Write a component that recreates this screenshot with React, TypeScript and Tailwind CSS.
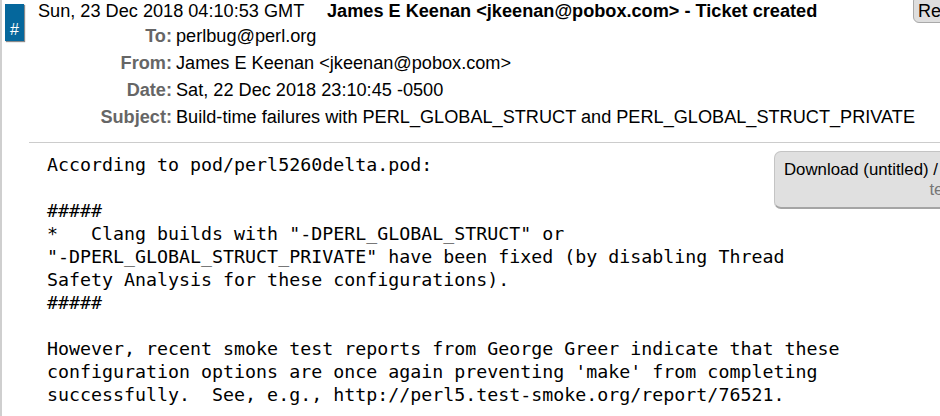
import React from "react";

const rows: { label: string; value: string }[] = [
	{ label: "To:", value: "perlbug@perl.org" },
	{ label: "From:", value: "James E Keenan <jkeenan@pobox.com>" },
	{ label: "Date:", value: "Sat, 22 Dec 2018 23:10:45 -0500" },
	{
		label: "Subject:",
		value: "Build-time failures with PERL_GLOBAL_STRUCT and PERL_GLOBAL_STRUCT_PRIVATE",
	},
];

const body = `According to pod/perl5260delta.pod:

#####
*   Clang builds with "-DPERL_GLOBAL_STRUCT" or
"-DPERL_GLOBAL_STRUCT_PRIVATE" have been fixed (by disabling Thread
Safety Analysis for these configurations).
#####

However, recent smoke test reports from George Greer indicate that these
configuration options are once again preventing 'make' from completing
successfully.  See, e.g., http://perl5.test-smoke.org/report/76521.`;

export default function App() {
	return (
		<div className="w-[940px] h-[416px] overflow-hidden bg-white flex font-['Liberation_Sans',Arial,sans-serif] text-black">
			{/* left rule */}
			<div className="w-[2px] shrink-0 bg-[#cfcfcf]" />

			<div className="flex flex-col shrink-0">
				{/* transaction header */}
				<div className="flex">
					<div className="ml-[3px] mt-[4px] w-[19px] h-[37px] shrink-0 bg-[#05679c] shadow-[1px_1px_1px_#8a8a8a] flex flex-col justify-end items-center pb-[3px]">
						<span className="text-white text-[16px] leading-[16px]">#</span>
					</div>

					<div className="ml-[14px] w-[962px] shrink-0">
						<div className="flex items-start text-[18.15px] leading-[23px] h-[23px]">
							<span className="w-[289px] shrink-0">
								Sun, 23 Dec 2018 04:10:53 GMT
							</span>
							<span className="font-bold">
								James E Keenan &lt;jkeenan@pobox.com&gt; - Ticket created
							</span>
							<button className="ml-auto w-[87px] -mt-[5px] pt-[5px] px-[4px] text-left leading-[21px] text-[18px] bg-[#dedede] border border-[#a9a9a9] rounded-[6px]">
								Reply
							</button>
						</div>

						<div className="grid grid-cols-[134px_1fr] gap-x-[4px] text-[18.15px] leading-[27px]">
							{rows.map((r) => (
								<React.Fragment key={r.label}>
									<div className="text-right font-bold text-[#666]">
										{r.label}
									</div>
									<div className="whitespace-nowrap">{r.value}</div>
								</React.Fragment>
							))}
						</div>
					</div>
				</div>

				{/* message body */}
				<div className="ml-[27px] mt-[11px] w-[1040px] border-t border-[#cccccc]">
					<div className="float-right mt-[8px] w-[295px] rounded-[7px] bg-[#e0e0e0] border border-[#c4c4c4] border-b-2 border-b-[#a5a5a5] pt-[8px] pb-[7px] pl-[9px] pr-[10px] text-[16.8px] leading-[20px]">
						<div className="whitespace-nowrap">Download (untitled) / with headers</div>
						<div className="text-right text-[#777] pr-[25px]">text/plain 1.2k</div>
					</div>
					<pre className="pt-[10px] pl-[18px] font-['DejaVu_Sans_Mono',monospace] text-[18.3px] leading-[23px] whitespace-pre">
						{body}
					</pre>
				</div>
			</div>
		</div>
	);
}
